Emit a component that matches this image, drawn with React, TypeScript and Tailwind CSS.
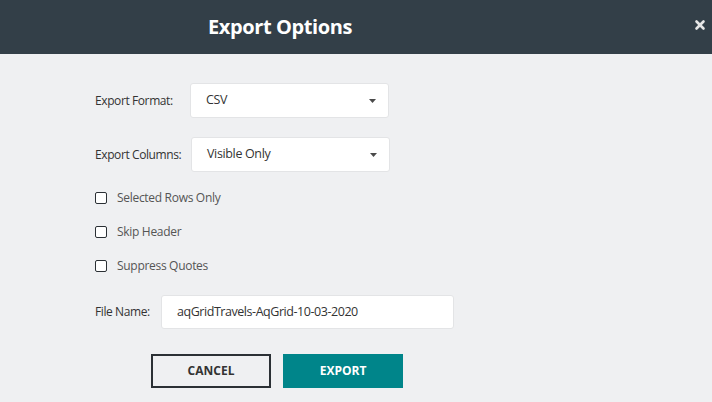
import { X } from "lucide-react";

function Caret() {
  return (
    <svg width="7" height="4" viewBox="0 0 7 4" className="shrink-0">
      <path d="M0 0 H7 L3.5 4 Z" fill="#4a4a4a" />
    </svg>
  );
}

function Select({ value, className }: { value: string; className: string }) {
  return (
    <div
      className={`h-[35px] flex items-center justify-between pl-[15px] pr-[12px] bg-white border border-[#e3e4e6] rounded-[3px] text-[12.5px] tracking-[-0.35px] text-[#333] ${className}`}
    >
      <span>{value}</span>
      <Caret />
    </div>
  );
}

function Check({ label }: { label: string }) {
  return (
    <label className="h-[34px] flex items-center gap-[10px] text-[12px] tracking-[-0.3px] text-[#555]">
      <span className="w-[12px] h-[12px] border-[1.5px] border-[#2b3035] rounded-[2px] bg-white" />
      {label}
    </label>
  );
}

export default function App() {
  return (
    <div className="w-[712px] h-[402px] bg-[#eff0f2] font-['Open_Sans',sans-serif] overflow-hidden">
      <div className="h-[54px] bg-[#333f48] flex items-center relative">
        <h1 className="w-[560px] text-center text-white text-[20px] font-bold tracking-[-0.4px]">Export Options</h1>
        <button aria-label="Close" className="absolute right-[5px] top-[18px] text-[#e6e6e6]">
          <X size={14} strokeWidth={4.5} />
        </button>
      </div>

      <div className="pl-[95px] pt-[29px] text-[12px] tracking-[-0.4px] text-[#333]">
        <div className="flex items-center">
          <span className="w-[95px]">Export Format:</span>
          <Select value="CSV" className="w-[199px]" />
        </div>
        <div className="flex items-center mt-[19px]">
          <span className="w-[96px]">Export Columns:</span>
          <Select value="Visible Only" className="w-[199px]" />
        </div>

        <div className="mt-[9px]">
          <Check label="Selected Rows Only" />
          <Check label="Skip Header" />
          <Check label="Suppress Quotes" />
        </div>

        <div className="flex items-center mt-[12px]">
          <span className="w-[66px]">File Name:</span>
          <div className="w-[293px] h-[34px] flex items-center pl-[15px] bg-white border border-[#e3e4e6] rounded-[3px] text-[12.5px] tracking-[-0.45px] text-[#333]">
            aqGridTravels-AqGrid-10-03-2020
          </div>
        </div>

        <div className="flex gap-[12px] mt-[25px] ml-[56px] tracking-normal">
          <button className="w-[120px] h-[34px] border-2 border-[#2b3035] text-[12px] font-bold text-[#333]">CANCEL</button>
          <button className="w-[120px] h-[34px] bg-[#00858a] text-[12px] font-bold text-white">EXPORT</button>
        </div>
      </div>
    </div>
  );
}
